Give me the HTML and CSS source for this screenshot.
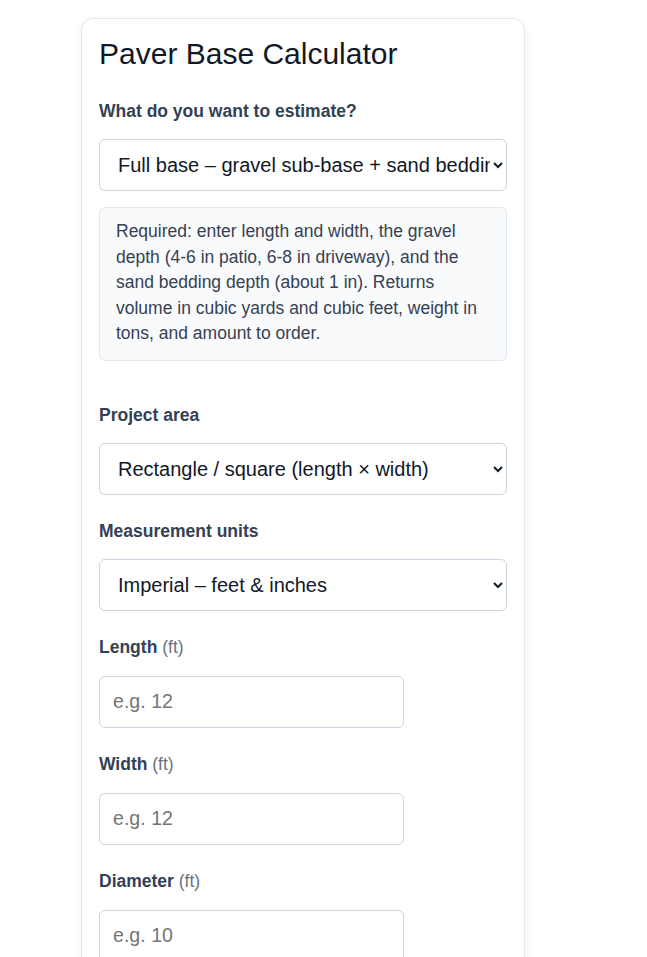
FILE: index.html
```html
<!DOCTYPE html>
<html>
<head>
  <meta charset="utf8" />
  <meta name="viewport" content="width=device-width, initial-scale=1" >
  <title>Paver Base Calculator</title>
  <link rel="stylesheet" href="styles.css">
</head>
<body>
  <div class="calc">
    <h1 class="calc__title">Paver Base Calculator</h1>

    <div class="field">
      <label class="field__label" for="mode">What do you want to estimate?</label>
      <select class="field__select" id="mode">
        <option>Full base – gravel sub-base + sand bedding</option>
        <option>Gravel sub-base only</option>
        <option>Sand bedding only</option>
      </select>
    </div>

    <div class="calc__note">
      Required: enter length and width, the gravel depth (4-6 in patio, 6-8 in driveway), and the sand bedding depth (about 1 in). Returns volume in cubic yards and cubic feet, weight in tons, and amount to order.
    </div>

    <div class="field">
      <label class="field__label" for="shape">Project area</label>
      <select class="field__select" id="shape">
        <option>Rectangle / square (length × width)</option>
        <option>Circle (diameter)</option>
      </select>
    </div>

    <div class="field">
      <label class="field__label" for="units">Measurement units</label>
      <select class="field__select" id="units">
        <option>Imperial – feet &amp; inches</option>
        <option>Metric – meters &amp; centimeters</option>
      </select>
    </div>

    <div class="field">
      <label class="field__label" for="length">Length <span class="field__unit">(ft)</span></label>
      <input class="field__input" id="length" type="number" placeholder="e.g. 12">
    </div>

    <div class="field">
      <label class="field__label" for="width">Width <span class="field__unit">(ft)</span></label>
      <input class="field__input" id="width" type="number" placeholder="e.g. 12">
    </div>

    <div class="field">
      <label class="field__label" for="diameter">Diameter <span class="field__unit">(ft)</span></label>
      <input class="field__input" id="diameter" type="number" placeholder="e.g. 10">
    </div>
  </div>
</body>
</html>
```

FILE: styles.css
```css
body{
  margin: 0;
  background: #fff;
  font-family: "Liberation Sans", Arial, sans-serif;
  color: #111827;
}

.calc{
  width: 408px;
  margin: 18px 0 0 81px;
  padding: 16px 17px 20px;
  border: 1px solid #e2e8f0;
  border-radius: 12px;
  background: #fff;
  box-shadow: 0 2px 10px rgba(15,23,42,0.06);
}

.calc__title{
  margin: 0 0 28px;
  font-size: 30px;
  line-height: 38px;
  font-weight: 400;
  color: #111827;
}

.field{
  margin-bottom: 26px;
}

.field__label{
  display: block;
  margin-bottom: 18px;
  font-size: 17.5px;
  line-height: 20px;
  font-weight: 700;
  color: #334155;
}

.field__unit{
  font-weight: 400;
  color: #6b7280;
}

.field__select{
  display: block;
  width: 100%;
  height: 52px;
  padding: 0 0 0 14px;
  border: 1px solid #cbd5e1;
  border-radius: 6px;
  background: #fff;
  font-family: inherit;
  font-size: 20px;
  color: #111827;
}

.field__input{
  display: block;
  box-sizing: border-box;
  width: 305px;
  height: 52px;
  margin-top: 19px;
  padding: 0 13px;
  border: 1px solid #cbd5e1;
  border-radius: 6px;
  font-family: inherit;
  font-size: 19.6px;
  color: #111827;
}

.field__input::placeholder{
  color: #757575;
}

.calc__note{
  margin: -10px 0 44px;
  padding: 11px 16px 13px;
  border: 1px solid #e2e8f0;
  border-radius: 6px;
  background: #f8fafc;
  font-size: 17.5px;
  line-height: 25.5px;
  color: #374151;
}
```
